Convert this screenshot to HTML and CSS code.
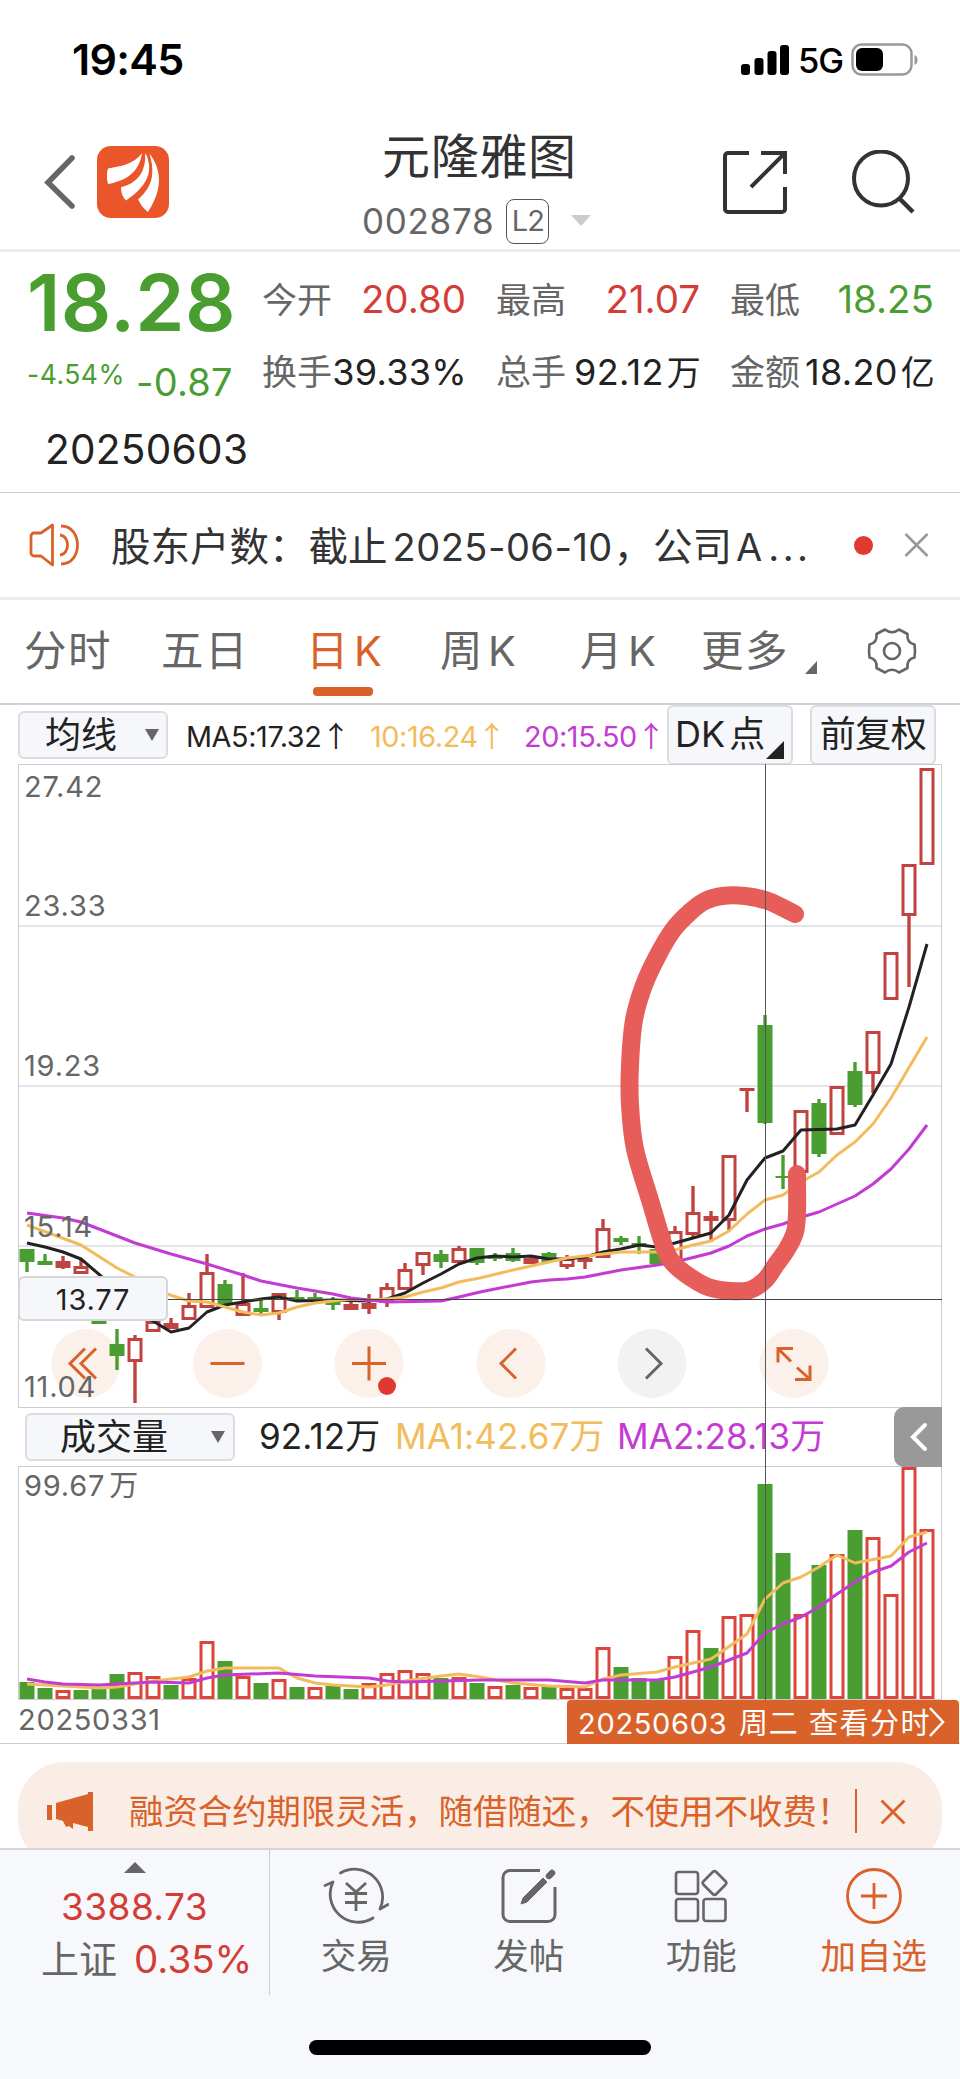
FILE: index.html
```html
<!DOCTYPE html>
<html lang="zh-CN">
<head>
<meta charset="utf-8">
<title>元隆雅图 002878</title>
<link rel="stylesheet" href="styles.css">
</head>
<body>
<div class="phone">
  <div class="status">
    <span class="clock">19:45</span>
    <div class="status-right">
      <svg width="48" height="32" viewBox="0 0 48 32"><g fill="#000"><rect x="0" y="20" width="9" height="11" rx="3"/><rect x="13.500" y="14" width="9" height="17" rx="3"/><rect x="26.500" y="7" width="9" height="24" rx="3"/><rect x="39" y="1" width="9" height="30" rx="3"/></g></svg>
      <span class="net">5G</span>
      <svg width="68" height="34" viewBox="0 0 68 34"><rect x="1.500" y="1.500" width="59" height="30" rx="9" fill="none" stroke="#999" stroke-width="2.500"/><rect x="5" y="5" width="27" height="23" rx="6" fill="#000"/><path d="M63.500 12c4 1 4 9 0 10z" fill="#999"/></svg>
    </div>
  </div>

  <header class="header">
    <svg class="back" width="32" height="56" viewBox="0 0 32 56"><path d="M28 4 4 28.500 28 52" fill="none" stroke="#666" stroke-width="5.500" stroke-linecap="round"/></svg>
    <svg class="logo" width="72" height="72" viewBox="0 0 72 72"><rect width="72" height="72" rx="14" fill="#ea5529"/><path d="M45 7C37 18 25 20 11 22.500 9.500 27 9.500 33 11 38 27 35 42 28 45 7z" fill="#fff"/><path d="M48.500 7C46 24 39 35 24 41c0 5 1 9 5 13.500C46 43 59 28 48.500 7z" fill="#fff"/><path d="M52 7c7 21 3 34-11 46 2 5 5 9 10 13C60 52 70 30 52 7z" fill="#fff"/><path d="M47 7C48 26 39 36 24 40M51 7c6 21 2 34-10 45" fill="none" stroke="#ea5529" stroke-width="2.400"/></svg>
    <div class="title">
      <h1>元隆雅图</h1>
      <div class="code"><span>002878</span><b>L2</b><svg width="22" height="12"><path d="M1 0h20L11 11z" fill="#ccc"/></svg></div>
    </div>
    <svg class="share" width="64" height="64" viewBox="0 0 64 64"><path d="M26 3H5a3 3 0 0 0-3 3v53a3 3 0 0 0 3 3h54a3 3 0 0 0 3-3V37M38 3h24v21M61 4 28 37" fill="none" stroke="#333" stroke-width="4"/></svg>
    <svg class="search" width="64" height="64" viewBox="0 0 64 64"><circle cx="29" cy="28.500" r="27" fill="none" stroke="#333" stroke-width="4"/><path d="m48 49 13 13" stroke="#333" stroke-width="4.500"/></svg>
  </header>

  <section class="quote">
    <div class="main-price">
      <div class="price">18.28</div>
      <div class="change"><span class="pct">-4.54%</span><span class="diff">-0.87</span></div>
    </div>
    <div class="stats">
      <div class="stat"><span>今开</span><em class="up">20.80</em></div>
      <div class="stat"><span>最高</span><em class="up">21.07</em></div>
      <div class="stat"><span>最低</span><em class="down">18.25</em></div>
      <div class="stat small"><span>换手</span><em>39.33%</em></div>
      <div class="stat small"><span>总手</span><em>92.12<i>万</i></em></div>
      <div class="stat small"><span>金额</span><em>18.20<i>亿</i></em></div>
    </div>
    <div class="day">20250603</div>
  </section>

  <section class="notice">
    <svg width="52" height="44" viewBox="0 0 52 44"><g fill="none" stroke="#d9622b" stroke-width="2.800"><path d="M23.500 2v40L12 33H5a3 3 0 0 1-3-3V13a3 3 0 0 1 3-3h7z" stroke-linejoin="round"/><path d="M31 12c10 1 10 19 0 20M32 3c22 0 22 38 0 38"/></g></svg>
    <p><span>股东户数：截止</span><span class="nd">2025-06-10</span><span>，公司</span><span class="na">A<b>...</b></span></p>
    <i class="dot"></i>
    <svg width="25" height="24" viewBox="0 0 25 24"><path d="m1.500 1 22 22m0-22-22 22" stroke="#999" stroke-width="2.600"/></svg>
  </section>

  <nav class="tabs">
    <a class="t1">分时</a><a class="t2">五日</a><a class="t3 on">日<span>K</span></a><a class="t4">周<span>K</span></a><a class="t5">月<span>K</span></a><a class="t6">更多</a>
    <svg class="corner" width="12" height="13"><path d="M12 0v13H0z" fill="#666"/></svg>
    <svg class="gear" width="50" height="52" viewBox="-25 -26 50 52"><g fill="none" stroke="#666" stroke-width="2.600" stroke-linejoin="round"><path d="M-7-21.500Q0-16 7-21.500L15.500-17Q14.500-8 22.500-6.500 23.500 0 22.500 6.500 14.500 8 15.500 17L7 21.500Q0 16-7 21.500L-15.500 17Q-14.500 8-22.500 6.500-23.500 0-22.500-6.500-14.500-8-15.500-17Z"/><circle r="8"/></g></svg>
  </nav>

  <div class="ind">
    <div class="select s1">均线<svg width="14" height="12"><path d="M0 0h14L7 12z" fill="#666"/></svg></div>
    <span class="ma m1">MA5:17.32<b>↑</b></span>
    <span class="ma m2">10:16.24<b>↑</b></span>
    <span class="ma m3">20:15.50<b>↑</b></span>
    <div class="btn dk">DK<span>点</span><svg width="18" height="18"><path d="M18 0v18H0z" fill="#222"/></svg></div>
    <div class="btn fq">前复权</div>
  </div>

  <div class="charts">
    <svg id="price" class="plot" width="960" height="644" viewBox="0 764 960 644"></svg>
    <div class="volbar">
      <div class="select s2">成交量<svg width="14" height="12"><path d="M0 0h14L7 12z" fill="#666"/></svg></div>
      <span class="v v1">92.12万</span><span class="v v2">MA1:42.67万</span><span class="v v3">MA2:28.13万</span>
      <div class="fold"><svg width="20" height="30" viewBox="0 0 20 30"><path d="M17 3 5 15l12 12" fill="none" stroke="#fff" stroke-width="4" stroke-linecap="round"/></svg></div>
    </div>
    <svg id="volume" class="plot" width="960" height="234" viewBox="0 1466 960 234"></svg>
    <div class="cross-v"></div>
    <div class="tip">13.77</div>
  </div>
  <div class="dates"><span>20250331</span><div class="tag"><b>20250603</b><b class="wk">周二</b><b class="see">查看分时</b><svg width="16" height="30" viewBox="0 0 16 30"><path d="m1 1 13 14L1 29" fill="none" stroke="#fff" stroke-width="2.500"/></svg></div></div>

  <div class="ad"><div class="pill">
    <svg width="46" height="40" viewBox="0 0 46 40"><g fill="#d9622b"><path d="M0 13h5v15H0zM9 11 41 2V0h5v39h-5v-4l-15-4v6l-4-3-3 1-3-6-7-2z"/></g></svg>
    <span>融资合约期限灵活，随借随还，不使用不收费！</span>
    <i></i>
    <svg width="26" height="26" viewBox="0 0 26 26"><path d="m1.500 1.500 23 23m0-23-23 23" stroke="#d9622b" stroke-width="2.800"/></svg>
  </div></div>

  <footer class="footer">
    <div class="index">
      <svg width="22" height="11"><path d="M0 11h22L11 0z" fill="#666"/></svg>
      <div class="idx">3388.73</div>
      <div class="idx2"><span>上证</span><em>0.35%</em></div>
    </div>
    <div class="acts">
      <div class="act"><svg width="66" height="60" viewBox="-33 -30 66 60"><g fill="none" stroke="#666" stroke-width="2.800"><path d="M-15.500-23A28 28 0 0 1 24 13l8-4.500M17 22A28 28 0 0 1-23-14l-8 3.500" stroke-linecap="round" stroke-linejoin="round"/><path d="M-10-13 0-4l10-9M0-4v19M-11-2.500h22M-11 6.500h22"/></g></svg><span>交易</span></div>
      <div class="act"><svg width="56" height="60" viewBox="-28 -30 56 60"><path d="M11-25.500h-30a7 7 0 0 0-7 7v37a7 7 0 0 0 7 7h38a7 7 0 0 0 7-7V-9" fill="none" stroke="#666" stroke-width="3"/><path d="m-8 8 2-6 20-20 4 4L-2 6z" fill="#666" stroke="#666"/><path d="m20-20 3-3" stroke="#666" stroke-width="6.500" stroke-linecap="round"/></svg><span>发帖</span></div>
      <div class="act"><svg width="56" height="60" viewBox="-28 -30 56 60"><g fill="none" stroke="#666" stroke-width="2.600"><rect x="-25" y="-24" width="22" height="22" rx="2.500"/><rect x="-25" y="3" width="22" height="22" rx="2.500"/><rect x="2.500" y="3" width="22" height="22" rx="2.500"/><rect x="-9" y="-9" width="18" height="18" rx="2.500" transform="translate(13.500 -13) rotate(45)"/></g></svg><span>功能</span></div>
      <div class="act add"><svg width="60" height="60" viewBox="-30 -30 60 60"><circle r="26.500" fill="none" stroke="#d9622b" stroke-width="2.800"/><path d="M-13 0h26M0-13v26" stroke="#d9622b" stroke-width="2.800"/></svg><span>加自选</span></div>
    </div>
  </footer>
  <div class="home"><i></i></div>
</div>
<script src="chart.js"></script>
</body>
</html>
```
FILE: styles.css
```css
* { box-sizing: border-box; }
body { margin: 0; background: #fff; font-family: Inter, "Noto Sans CJK SC", sans-serif; color: #333; }
svg { display: block; flex: none; }
em, i, b { font-style: normal; font-weight: 400; }
.phone { width: 960px; height: 2079px; overflow: hidden; display: flex; flex-direction: column; background: #fff; white-space: nowrap; }
.phone > * { flex: none; }

.status { height: 120px; display: flex; justify-content: space-between; padding: 0 41px 0 72px; }
.clock { font-size: 43px; font-weight: 600; line-height: 119px; color: #000; letter-spacing: -.7px; }
.status-right { display: flex; align-items: center; height: 119px; }
.net { font-size: 34.500px; font-weight: 500; color: #000; margin: 1px 8px 0 9px; letter-spacing: -1px; }

.header { height: 132px; border-bottom: 3px solid #ececec; display: flex; }
.back { margin: 34px 0 0 44px; }
.logo { margin: 26px 0 0 21px; }
.title { width: 240px; margin-left: 192px; }
h1 { margin: 12px 0 0 21px; font-size: 48px; line-height: 50px; font-weight: 400; letter-spacing: .7px; }
.code { display: flex; align-items: center; height: 44px; margin-top: 17px; font-size: 35px; color: #666; padding-left: 1px; letter-spacing: .7px; }
.code b { border: 1.500px solid #555; border-radius: 8px; width: 43px; height: 45px; line-height: 42px; text-align: center; font-size: 29px; margin: 0 21px 0 12px; letter-spacing: -1px; }
.share { margin: 30px 0 0 122px; }
.search { margin: 30px 0 0 65px; }

.quote { height: 241px; border-bottom: 1.500px solid #ccc; display: grid; grid-template-columns: 262px 1fr; grid-template-rows: 158px 80px; }
.main-price { padding-left: 27px; color: #4a9d30; }
.price { font-size: 79px; font-weight: 600; line-height: 80px; margin-top: 10px; letter-spacing: .3px; }
.change { display: flex; margin-top: 17px; }
.pct { font-size: 26.500px; line-height: 30px; width: 109px; letter-spacing: .5px; }
.diff { font-size: 38px; line-height: 44px; margin-top: 1px; letter-spacing: .2px; }
.stats { display: grid; grid-template-columns: 204px 204px 204px; column-gap: 30px; grid-template-rows: 72px 72px; padding-top: 12px; }
.stat { display: flex; justify-content: space-between; line-height: 72px; font-size: 35px; color: #666; }
.stat em { font-size: 38.500px; line-height: 70px; color: #222; }
.stat.small em { font-size: 36px; line-height: 72px; }
.stat em.up { color: #d43d36; }
.stat em.down { color: #4a9d30; }
.stat em i { font-size: 34px; margin-left: 3px; }
.stat.small em { letter-spacing: .3px; margin-right: -1px; }
.day { font-size: 40.500px; line-height: 80px; padding-left: 45px; color: #222; letter-spacing: .3px; }

.notice { height: 107px; border-bottom: 3px solid #ececec; display: flex; align-items: center; }
.notice svg:first-child { margin-left: 29px; }
.notice p { margin: 0 0 3px 30px; width: 734px; font-size: 39.500px; display: flex; align-items: baseline; }
.nd { margin-left: 5px; width: 221px; font-size: 38px; letter-spacing: .5px; }
.na { margin-left: 4px; font-size: 38px; }
.na b { letter-spacing: 3.500px; margin-left: 6px; }
.dot { width: 19px; height: 19px; border-radius: 50%; background: #e03a30; margin: 0 31px 0 9px; }

.tabs { height: 105px; border-bottom: 2px solid #d2d2d6; display: flex; font-size: 42.500px; line-height: 102px; color: #666; }
.tabs a { position: relative; letter-spacing: 1.500px; }
.tabs a span { margin-left: 4px; font-size: 41.500px; }
.t1 { margin-left: 24px; width: 137px; }
.t2 { width: 145px; }
.t3 { width: 134px; }
.t4 { width: 140px; }
.t5 { width: 121px; }
.t6 { width: 104px; }
.tabs .on { color: #d9622b; }
.on::after { content: ""; position: absolute; left: 7px; top: 87px; width: 60px; height: 9px; border-radius: 4px; background: #d9622b; }
.corner { margin-top: 61px; }
.gear { margin: 25px 0 0 50px; }

.ind { height: 59px; display: flex; align-items: center; color: #222; }
.select { background: #f6f7fa; border: 2px solid #dcdde2; border-radius: 6px; height: 48px; font-size: 36px; line-height: 44px; display: flex; align-items: center; justify-content: space-between; color: #222; }
.s1 { width: 150px; margin-left: 18px; padding: 0 7px 0 25px; }
.ma { font-size: 28.800px; letter-spacing: -.4px; }
.ma b { display: inline-block; width: 21px; font-family: "Noto Sans CJK SC"; text-align: center; }
.m1 { margin-left: 18px; width: 184px; }
.m2 { width: 154px; color: #f2bc5c; }
.m3 { width: 143px; color: #c43bd3; }
.btn { height: 60px; width: 126px; background: #f6f7fa; border: 2px solid #dcdde2; border-radius: 6px; font-size: 36px; line-height: 54px; text-align: center; position: relative; }
.dk { text-align: left; padding-left: 6px; }
.dk span { margin-left: 4px; }
.dk svg { position: absolute; right: 7px; bottom: 4px; }
.fq { margin-left: 17px; letter-spacing: -.5px; }

.charts { position: relative; }
.plot text { font-size: 29px; letter-spacing: .8px; fill: #666; }
.volbar { height: 58px; display: flex; align-items: center; position: relative; }
.s2 { width: 210px; margin-left: 25px; padding: 0 8px 0 33px; }
.v { font-size: 35px; line-height: 54px; padding-bottom: 2px; letter-spacing: .1px; }
.v1 { margin-left: 24px; width: 136px; color: #222; }
.v2 { width: 222px; color: #f2bc5c; }
.v3 { color: #c43bd3; }
.fold { position: absolute; right: 18px; top: -1px; width: 48px; height: 60px; background: #999; border-radius: 10px 0 0 10px; padding: 15px 0 0 14px; }
.cross-v { position: absolute; left: 765px; top: 0; width: 1px; height: 936px; background: #555; }
.tip { position: absolute; left: 18px; top: 512px; width: 150px; height: 45px; border: 2px solid #d5d6da; border-radius: 6px; background: #f6f7fa; text-align: center; font-size: 29px; line-height: 43px; letter-spacing: .8px; color: #222; }

.dates { height: 44px; border-bottom: 1px solid #ccc; display: flex; justify-content: space-between; font-size: 29px; letter-spacing: .7px; color: #666; line-height: 40px; padding: 0 1px 0 18px; }
.tag { width: 392px; height: 44px; background: #d9622b; border-radius: 4px 4px 0 0; color: #fff; display: flex; padding: 7px 0 0 11px; line-height: 34px; }
.tag b { width: 161px; }
.tag .wk { width: 70px; }
.tag .see { width: 120px; letter-spacing: 1.500px; }

.ad { height: 104px; padding: 18px 18px 0; overflow: hidden; }
.pill { height: 104px; border-radius: 46px; background: #faede5; display: flex; padding: 30px 0 0 29px; color: #d9622b; font-size: 34.400px; line-height: 40px; }
.pill span { margin-left: 36px; width: 726px; }
.pill i { width: 2px; height: 44px; margin-top: -3px; background: #d9622b; }
.pill svg:last-child { margin: 7px 0 0 23px; }

.footer { height: 147px; border-top: 2px solid #d5d5da; background: #f7f8fb; display: flex; }
.index { width: 270px; border-right: 1px solid #ccc; display: flex; flex-direction: column; align-items: center; padding-top: 12px; color: #d43d36; }
.idx { font-size: 37px; line-height: 44px; margin-top: 12px; letter-spacing: .4px; }
.idx2 { display: flex; font-size: 38.500px; line-height: 52px; margin: 4px 0 0 41px; gap: 17px; align-self: stretch; }
.idx2 span { color: #666; font-size: 38px; }
.acts { display: flex; flex: 1; }
.act { width: 172.500px; display: flex; flex-direction: column; align-items: center; padding-top: 16px; font-size: 35.500px; color: #666; line-height: 40px; gap: 11px; }
.act.add { color: #d9622b; }
.home { height: 84px; background: #f7f8fb; display: flex; justify-content: center; padding-top: 45px; }
.home i { width: 342px; height: 15px; border-radius: 8px; background: #000; }
```
FILE: chart.js
```
const RED = '#bf4340', GREEN = '#4a9d30', VRED = '#dc453c';
const YELLOW = '#f2bc5c', PURPLE = '#c43bd3', BLACK = '#222';
const cx = i => 27 + 18 * i;

// direction, high, body top, body bottom, low
const candles = [
  ['d',1249,1249,1262,1272],['d',1254,1261,1265,1265],['u',1256,1261,1268,1269],['u',1260,1266,1274,1274],['d',1290,1300,1324,1324],
  ['d',1329,1344,1356,1370],['u',1335,1338,1362,1403],['u',1313,1321,1332,1332],['u',1318,1323,1329,1329],['u',1293,1305,1320,1320],
  ['u',1254,1272,1308,1308],['d',1280,1284,1305,1305],['u',1273,1303,1316,1316],['d',1300,1308,1312,1314],['u',1293,1293,1313,1320],
  ['d',1290,1297,1300,1300],['d',1293,1297,1300,1300],['d',1297,1301,1305,1310],['u',1300,1304,1310,1310],['u',1294,1303,1309,1314],
  ['u',1283,1287,1303,1307],['u',1263,1269,1290,1290],['u',1252,1252,1266,1275],['d',1250,1254,1262,1268],['u',1246,1248,1263,1263],
  ['d',1248,1248,1263,1265],['d',1253,1256,1259,1261],['d',1248,1253,1261,1262],['u',1255,1258,1264,1264],['d',1252,1253,1262,1263],
  ['u',1255,1258,1267,1269],['u',1256,1258,1262,1269],['u',1219,1228,1258,1258],['d',1236,1238,1242,1245],['d',1236,1243,1245,1254],
  ['d',1247,1249,1264,1264],['u',1226,1231,1263,1263],['u',1186,1212,1235,1237],['u',1211,1216,1221,1242],['u',1155,1155,1221,1230],
  ['u',1088,1088,1091,1112],['d',1015,1025,1123,1124],['d',1155,1176,1178,1189],['u',1110,1110,1173,1173],['d',1099,1103,1154,1157],
  ['u',1086,1086,1135,1135],['d',1062,1071,1105,1107],['u',1031,1031,1074,1093],['u',952,952,1000,1000],['u',864,864,916,987],['u',768,768,865,865]
];

// top of each volume bar
const volumes = [1682,1688,1690,1690,1689,1674,1672,1676,1685,1678,1641,1661,1676,1683,1679,1687,1687,1686,1689,1683,1673,1670,1673,1678,1677,1683,
  1686,1685,1687,1687,1688,1688,1647,1667,1678,1680,1656,1630,1648,1616,1614,1484,1553,1614,1565,1554,1530,1537,1594,1467,1529];
const volDir = 'ddudd' + 'duudu' + 'ududu' + 'duddu' + 'uuudu' + 'dudud' + 'uuudd' + 'duudu' + 'uddud' + 'uduuuu';

const ma5 = [[27,1243],[45,1247],[63,1252],[81,1259],[101,1276],[125,1300],[153,1321],[171,1332],[189,1328],[207,1312],[225,1305],[243,1302],[261,1299],[279,1297],[297,1301],[333,1300],[369,1301],[387,1299],[405,1293],[423,1283],[441,1274],[459,1264],[477,1258],[495,1256],[513,1257],[531,1256],[549,1259],[567,1259],[585,1257],[603,1252],[621,1249],[639,1245],[657,1247],[675,1243],[693,1238],[711,1233],[729,1215],[747,1180],[765,1158],[783,1151],[801,1130],[837,1129],[855,1125],[873,1095],[891,1064],[909,1007],[927,944]];
const ma10 = [[27,1225],[81,1245],[117,1268],[133,1276],[170,1295],[189,1301],[207,1302],[225,1307],[243,1312],[261,1315],[279,1313],[297,1307],[315,1303],[351,1299],[369,1300],[387,1299],[405,1297],[423,1292],[441,1288],[459,1282],[480,1278],[513,1270],[549,1262],[567,1258],[603,1254],[621,1252],[657,1252],[675,1250],[693,1245],[711,1241],[729,1231],[747,1214],[765,1200],[783,1195],[801,1182],[819,1172],[837,1155],[855,1142],[873,1124],[891,1098],[927,1037]];
const ma20 = [[27,1213],[63,1218],[81,1222],[135,1243],[171,1254],[207,1264],[243,1275],[261,1281],[297,1288],[333,1294],[351,1298],[369,1300],[387,1302],[441,1301],[459,1297],[480,1292],[495,1289],[531,1282],[549,1280],[567,1279],[585,1277],[621,1270],[657,1265],[675,1262],[711,1253],[729,1246],[747,1236],[765,1229],[783,1224],[805,1216],[819,1212],[855,1196],[873,1184],[891,1169],[909,1149],[927,1125]];
const vma1 = [[27,1684],[63,1686],[99,1688],[117,1687],[153,1681],[189,1677],[207,1671],[225,1668],[279,1668],[297,1678],[315,1683],[333,1685],[369,1687],[387,1685],[405,1681],[441,1676],[459,1674],[480,1677],[513,1683],[549,1686],[585,1687],[603,1679],[621,1675],[657,1672],[675,1667],[711,1659],[747,1634],[765,1599],[783,1583],[801,1577],[819,1567],[837,1555],[855,1563],[891,1556],[909,1537],[927,1532]];
const vma2 = [[27,1679],[45,1682],[63,1684],[99,1685],[153,1682],[189,1683],[207,1678],[225,1675],[279,1673],[315,1676],[369,1678],[387,1681],[405,1682],[480,1680],[549,1680],[585,1683],[603,1680],[657,1680],[675,1677],[711,1667],[747,1653],[765,1633],[783,1624],[801,1617],[819,1607],[837,1594],[855,1582],[873,1572],[891,1566],[909,1552],[927,1543]];

const line = (x1, y1, x2, y2, c, w = 1.5) => `<path d="M${x1} ${y1}L${x2} ${y2}" stroke="${c}" stroke-width="${w}"/>`;
const poly = (pts, c) => `<polyline points="${pts.join(' ')}" fill="none" stroke="${c}" stroke-width="3" stroke-linejoin="round"/>`;
const box = (x, top, bottom, c, hollow) => hollow && bottom - top > 7
  ? `<rect x="${x - 6}" y="${top + 1.5}" width="12" height="${bottom - top - 3}" fill="#fff" stroke="${c}" stroke-width="3"/>`
  : `<rect x="${x - 7.5}" y="${top}" width="15" height="${bottom - top}" fill="${c}"/>`;

// smooth curve through a list of points
const spline = pts => pts.slice(1).reduce((d, q, k) => {
  const a = pts[k - 1] || pts[k], b = pts[k], e = pts[k + 2] || q;
  return d + `C${b[0] + (q[0] - a[0]) / 6} ${b[1] + (q[1] - a[1]) / 6} ${q[0] - (e[0] - b[0]) / 6} ${q[1] - (e[1] - b[1]) / 6} ${q[0]} ${q[1]}`;
}, `M${pts[0].join(' ')}`);
const brush = [[795,914],[768,901],[745,896],[722,896],[705,901],[690,912],[673,930],[658,955],[644,985],[634,1020],[630,1065],[630,1105],[635,1149],[650,1200],[665,1249],[675,1265],[690,1277],[708,1287],[730,1291],[750,1290],[765,1280],[775,1266],[787,1249],[795,1232],[797,1213],[797,1174]];

let p = '';
for (const y of [926, 1086, 1246]) p += line(18, y, 942, y, '#e3e3e8', 2);
p += `<path d="M18.500 1408V764.500H941.500V1408M18 1407.500H942" fill="none" stroke="#ccc"/>`;

const controls = [
  [86, 'M-1-15-16 0-1 15M10-15-5 0 10 15'], [227.5, 'M-17 0h34'], [369, 'M-17 0h34M0-17v34'],
  [511, 'M5-15-10 0 5 15'], [652, 'M-6-15 9 0-6 15'], [794, 'M-16-1v-14h15M-15-14-3-2M16 2v14H1M15 15 3 4']
];
for (const [x, d] of controls) {
  const grey = x === 652;
  p += `<g transform="translate(${x} 1363.500)"><circle r="34.500" fill="${grey ? '#f2f2f2' : '#fbf0ea'}"/><path d="${d}" fill="none" stroke="${grey ? '#666' : '#d9622b'}" stroke-width="3"/></g>`;
}
p += '<circle cx="387" cy="1386" r="9" fill="#e03a30"/>';

candles.forEach(([dir, hi, top, bot, lo], i) => {
  const c = dir === 'u' ? RED : GREEN, x = cx(i);
  if (top > hi) p += line(x, hi, x, top, c, 3.4);
  if (lo > bot) p += line(x, bot, x, lo, c, 3.4);
  p += box(x, top, bot, c, dir === 'u');
});
p += poly(ma5, BLACK) + poly(ma10, YELLOW) + poly(ma20, PURPLE);
[['27.42', 797], ['23.33', 916], ['19.23', 1076], ['15.14', 1237], ['11.04', 1397]].forEach(([t, y]) => {
  p += `<text x="24" y="${y}">${t}</text>`;
});
p += `<path d="${spline(brush)}" fill="none" stroke="#e75d59" stroke-width="18" stroke-linecap="round" stroke-linejoin="round"/>`;
p += line(18, 1299.5, 942, 1299.5, '#444', 1.2);
document.getElementById('price').innerHTML = p;

let v = '<path d="M18.500 1700V1466.500H941.500V1700M18 1699.500H942" fill="none" stroke="#ccc"/>';
volumes.forEach((top, i) => {
  const up = volDir[i] === 'u';
  v += box(cx(i), top, 1699, up ? VRED : GREEN, up);
});
v += poly(vma1, YELLOW) + poly(vma2, PURPLE) + '<text x="24" y="1496">99.67<tspan dx="4">万</tspan></text>';
document.getElementById('volume').innerHTML = v;
```
